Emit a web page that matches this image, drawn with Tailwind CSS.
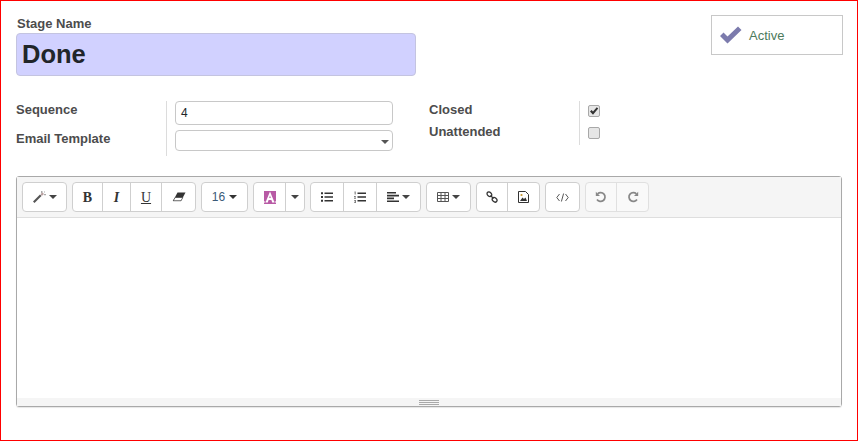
<!DOCTYPE html>
<html lang="en">
<head>
    <meta charset="UTF-8">
    <title>Stage - Done</title>
    <script src="https://cdn.jsdelivr.net/npm/@tailwindcss/browser@4"></script>
</head>
<body class="bg-white">
<div class="w-[858px] h-[441px] box-border border border-[#ff0000] overflow-hidden font-['Liberation_Sans',Arial,sans-serif] text-[#4c4c4c] pl-[15px] pr-[14px] pt-[14px]">

    <!-- title + active -->
    <div class="flex justify-between items-start h-[86px]">
        <div class="w-[400px]">
            <div class="text-[13px] leading-[15px] font-bold pl-px pt-[1px] mb-[2px]">Stage Name</div>
            <div class="h-[43px] bg-[#d1d1ff] border border-[#c4c4e0] rounded-[4px] pl-[4px] flex items-center text-[25.5px] font-bold text-[#212529]"><span class="pl-px">Done</span></div>
        </div>
        <div class="w-[132px] h-[40px] border border-[#c8c8c8] flex items-center pl-2">
            <svg width="22" height="18" viewBox="0 0 22 18" class="text-[#7c7bad]"><path d="M0 10 L3.5 6.5 L7.5 10.5 L18 0.5 L21.5 4 L7.5 17.5 Z" fill="currentColor"/></svg>
            <span class="ml-[7px] text-[13px] leading-[15px] text-[#4c7a5c] pt-px">Active</span>
        </div>
    </div>

    <!-- fields -->
    <div class="flex h-[75px]">
        <div class="flex w-[378px]">
            <div class="w-[151px] h-[55px] border-r border-[#dcdcdc] text-[13px] font-bold">
                <div class="h-[30px] pt-[1px] leading-[15px]">Sequence</div>
                <div class="leading-[15px]">Email Template</div>
            </div>
            <div class="pl-2 w-[226px]">
                <div class="h-[24px] border border-[#c8c8c8] rounded-[4px] text-[12px] text-[#212529] pl-[5px] flex items-center">4</div>
                <div class="relative h-[21px] mt-[5px] border border-[#c8c8c8] rounded-[4px]">
                    <span class="absolute right-[3px] top-[9px] w-0 h-0 border-x-[4px] border-x-transparent border-t-[4px] border-t-[#555]"></span>
                </div>
            </div>
        </div>
        <div class="flex ml-[35px]">
            <div class="w-[151px] h-[44px] border-r border-[#dcdcdc] text-[13px] font-bold">
                <div class="h-[22px] pt-[1px] leading-[15px]">Closed</div>
                <div class="pt-[1px] leading-[15px]">Unattended</div>
            </div>
            <div class="pl-2 pt-1 flex flex-col gap-[10px]">
                <div class="w-3 h-3 rounded-[2px] border border-[#a8a8a8] bg-[#e6e6e6] flex items-center justify-center">
                    <svg width="10" height="10" viewBox="0 0 10 10"><path d="M1 5.5 L2.6 4 L4 5.5 L7.8 1.2 L9.2 2.6 L4 8.8 Z" fill="#333"/></svg>
                </div>
                <div class="w-3 h-3 rounded-[2px] border border-[#a8a8a8] bg-[#e6e6e6]"></div>
            </div>
        </div>
    </div>

    <!-- editor -->
    <div class="w-[826px] h-[231px] border border-[#a9a9a9] rounded-[3px] flex flex-col shadow-[0_1px_1px_rgba(0,0,0,0.1)]">
        <div class="h-[41px] bg-[#f5f5f5] border-b border-[#dedede] flex items-start pl-[5px] pt-[5px] gap-[5px] text-[#333]">
            <div class="flex h-[30px] bg-white border border-[#cfcfcf] rounded-[4px]">
                <div class="w-[43px] flex items-center justify-center gap-[3px]">
                    <svg width="14" height="12" viewBox="0 0 14 12"><path d="M1 10.5 L8 3.5 L9.5 5 L2.5 12 Z" fill="#555"/><path d="M9 0 h1.5 v2 h-1.5z M12 3 h2 v1.2 h-2z M12 0.5 h1 v1 h-1z" fill="#aaa"/><path d="M8.5 3 L10.5 1.5 L12 3 L9.8 5 Z" fill="#b9a0a0"/></svg>
                    <span class="w-0 h-0 border-x-[4px] border-x-transparent border-t-[4px] border-t-[#444]"></span>
                </div>
            </div>
            <div class="flex h-[30px] bg-white border border-[#cfcfcf] rounded-[4px]">
                <div class="w-[29px] flex items-center justify-center font-['Liberation_Serif',serif] font-bold text-[14px]">B</div>
                <div class="w-[28px] border-l border-[#cfcfcf] flex items-center justify-center font-['Liberation_Serif',serif] italic font-bold text-[14px]">I</div>
                <div class="w-[31px] border-l border-[#cfcfcf] flex items-center justify-center font-['Liberation_Serif',serif] underline text-[14px]">U</div>
                <div class="w-[34px] border-l border-[#cfcfcf] flex items-center justify-center">
                    <svg width="14" height="10" viewBox="0 0 14 10"><path d="M5.5 .5 H13.5 L9 9 H1 Z" fill="#333"/><path d="M3.2 5.5 H10.8 L9 8.8 H1.2 Z" fill="#fff" stroke="#333" stroke-width="0.6"/></svg>
                </div>
            </div>
            <div class="flex h-[30px] w-[47px] bg-white border border-[#cfcfcf] rounded-[4px] items-center justify-center gap-1 text-[12px] text-[#3b5a78]">
                16<span class="w-0 h-0 border-x-[4px] border-x-transparent border-t-[4px] border-t-[#333]"></span>
            </div>
            <div class="flex h-[30px] bg-white border border-[#cfcfcf] rounded-[4px]">
                <div class="w-[31px] flex items-center justify-center">
                    <svg width="12" height="13" viewBox="0 0 12 13"><path d="M0 0 H12 V13 H0 Z" fill="#b85aa5"/><path d="M6 .5 L10.5 11.5 H8.2 L7.4 9 H4.6 L3.8 11.5 H1.5 Z M5.2 7 H6.8 L6 4.5 Z" fill="#fff" fill-rule="evenodd"/><path d="M0 10.5 H1.5 L1 11.5 H11 L10.5 10.5 H12 V11.5 H0 Z" fill="#fff"/></svg>
                </div>
                <div class="w-[19px] border-l border-[#cfcfcf] flex items-center justify-center">
                    <span class="w-0 h-0 border-x-[4px] border-x-transparent border-t-[4px] border-t-[#444]"></span>
                </div>
            </div>
            <div class="flex h-[30px] bg-white border border-[#cfcfcf] rounded-[4px]">
                <div class="w-[32px] flex items-center justify-center">
                    <svg width="12" height="10" viewBox="0 0 12 10" fill="#333"><path d="M0 0.2h2v2H0z M0 4h2v2H0z M0 7.8h2v2H0z M3.5 .5h8.5v1.5H3.5z M3.5 4.2h8.5v1.5H3.5z M3.5 8h8.5v1.5H3.5z"/></svg>
                </div>
                <div class="w-[33px] border-l border-[#cfcfcf] flex items-center justify-center">
                    <svg width="12" height="12" viewBox="0 0 12 12" fill="#333"><path d="M3.5 1.5h8.5v1.5H3.5z M3.5 5.2h8.5v1.5H3.5z M3.5 9h8.5v1.5H3.5z"/><path d="M0.5 0.5h1.2v3h-1z M0 5h2v.8H1l1 1.4v.6H0v-.7h1L0 5.8z M0 9h2v3H0v-.7h1.2v-.5H.5v-.5h.7v-.5H0z" fill="#777"/></svg>
                </div>
                <div class="w-[44px] border-l border-[#cfcfcf] flex items-center justify-center gap-[3px]">
                    <svg width="12" height="10" viewBox="0 0 12 10" fill="#333"><path d="M0 0h9v1.6H0z M0 2.8h12v1.6H0z M0 5.6h7v1.6H0z M0 8.4h12v1.6H0z"/></svg>
                    <span class="w-0 h-0 border-x-[4px] border-x-transparent border-t-[4px] border-t-[#444]"></span>
                </div>
            </div>
            <div class="flex h-[30px] w-[45px] bg-white border border-[#cfcfcf] rounded-[4px] items-center justify-center gap-[3px]">
                <svg width="12" height="10" viewBox="0 0 12 10" fill="none" stroke="#555" stroke-width="1"><path d="M.5.5h11v9H.5z M.5 3.5h11 M.5 6.5h11 M4 .5v9 M8 .5v9"/></svg>
                <span class="w-0 h-0 border-x-[4px] border-x-transparent border-t-[4px] border-t-[#444]"></span>
            </div>
            <div class="flex h-[30px] bg-white border border-[#cfcfcf] rounded-[4px]">
                <div class="w-[30px] flex items-center justify-center">
                    <svg width="12" height="12" viewBox="0 0 12 12" fill="none" stroke="#333" stroke-width="1.3"><ellipse cx="3.4" cy="3.2" rx="2.6" ry="2" transform="rotate(40 3.4 3.2)"/><ellipse cx="8.6" cy="8.8" rx="2.6" ry="2" transform="rotate(40 8.6 8.8)"/><path d="M4.5 4.5 L7.5 7.5"/></svg>
                </div>
                <div class="w-[32px] border-l border-[#cfcfcf] flex items-center justify-center">
                    <svg width="11" height="12" viewBox="0 0 11 12"><path d="M.5.5h7l3 3v8H.5z" fill="#fff" stroke="#333"/><path d="M2 10 L4.5 6.5 L6 8 L7.5 6.5 L9 10 Z" fill="#333"/><circle cx="3.5" cy="4" r="1.1" fill="#c8962b"/></svg>
                </div>
            </div>
            <div class="flex h-[30px] w-[35px] bg-white border border-[#cfcfcf] rounded-[4px] items-center justify-center">
                <svg width="13" height="9" viewBox="0 0 13 9" fill="none" stroke="#444" stroke-width="0.9"><path d="M3.5 1 L.8 4.5 L3.5 8 M9.5 1 L12.2 4.5 L9.5 8 M7.6 .5 L5.4 8.5"/></svg>
            </div>
            <div class="flex h-[30px] bg-[#f9f9f9] border border-[#e0e0e0] rounded-[4px]">
                <div class="w-[30px] flex items-center justify-center">
                    <svg width="12" height="12" viewBox="0 0 12 12" fill="none" stroke="#888" stroke-width="1.7"><path d="M2.6 2.8 A4.4 4.4 0 1 1 2 8.5"/><path d="M.8 .8 L.8 5 L5 5 Z" fill="#888" stroke="none"/></svg>
                </div>
                <div class="w-[32px] border-l border-[#e0e0e0] flex items-center justify-center">
                    <svg width="12" height="12" viewBox="0 0 12 12" fill="none" stroke="#888" stroke-width="1.7"><path d="M9.4 2.8 A4.4 4.4 0 1 0 10 8.5"/><path d="M11.2 .8 L11.2 5 L7 5 Z" fill="#888" stroke="none"/></svg>
                </div>
            </div>
        </div>
        <div class="flex-1 bg-white"></div>
        <div class="h-[8px] bg-[#f5f5f5] flex flex-col items-center justify-center gap-px">
            <div class="w-5 h-px bg-[#a9a9a9]"></div>
            <div class="w-5 h-px bg-[#a9a9a9]"></div>
            <div class="w-5 h-px bg-[#a9a9a9]"></div>
        </div>
    </div>
</div>
</body>
</html>
